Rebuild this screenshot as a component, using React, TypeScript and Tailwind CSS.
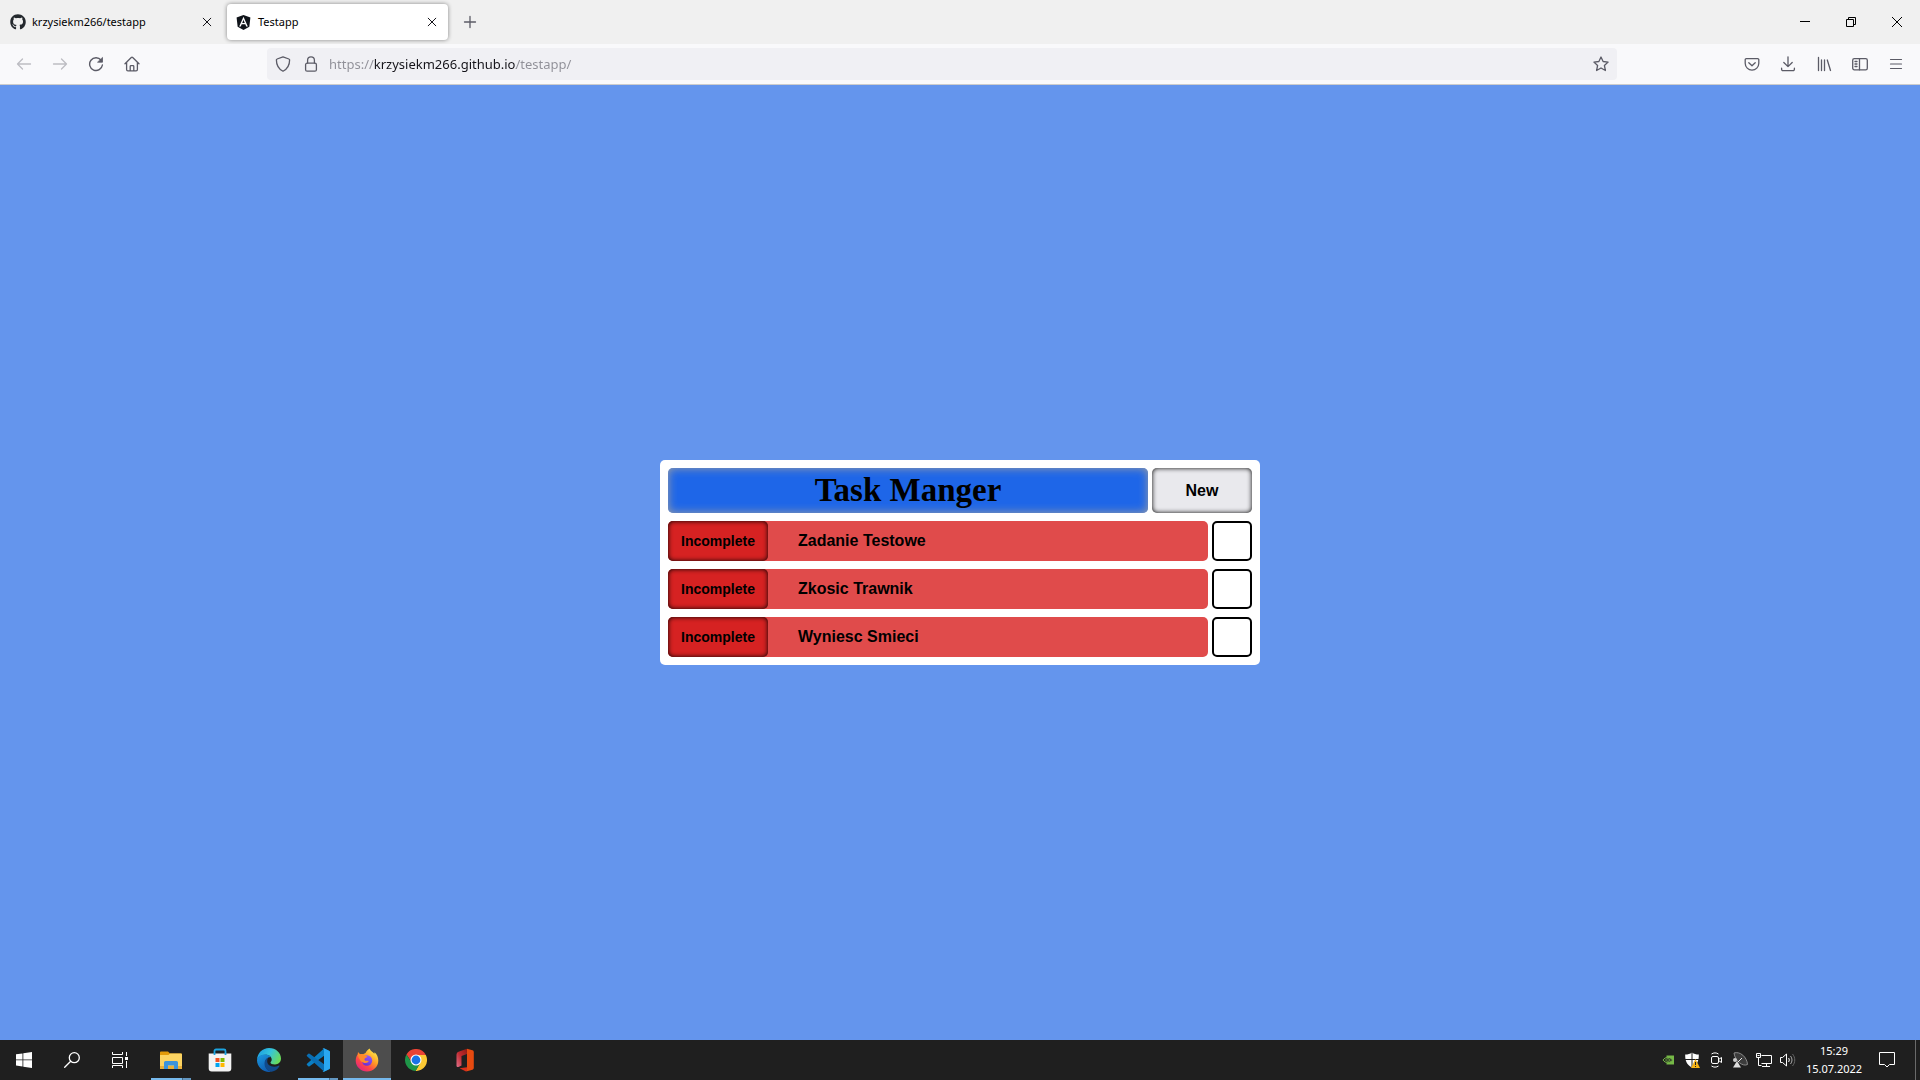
import { useState, type ReactNode } from "react";
import { FaAngular, FaGithub } from "react-icons/fa";

const line = {
  fill: "none",
  stroke: "currentColor",
  strokeLinecap: "round",
  strokeLinejoin: "round",
} as const;

function IconButton({ label, className = "", children }: { label: string; className?: string; children: ReactNode }) {
  return (
    <button type="button" aria-label={label} className={`flex h-8 w-9 shrink-0 items-center justify-center ${className}`}>
      {children}
    </button>
  );
}

function CloseIcon() {
  return (
    <svg width="16" height="16" viewBox="0 0 16 16" {...line}>
      <path d="M4.2 4.2l7.6 7.6M11.8 4.2l-7.6 7.6" />
    </svg>
  );
}

function TabStrip() {
  return (
    <header className="flex h-11 items-center bg-[#f0f0f0] text-[#15141a]">
      <div className="mr-2 flex h-9 w-[219px] items-center pl-2.5">
        <FaGithub size={16} color="#24292e" />
        <a href="#repo" className="ml-1.5 flex-1 text-[11px] leading-4 text-black">krzysiekm266/testapp</a>
        <button type="button" aria-label="Close krzysiekm266/testapp" className="mr-1">
          <CloseIcon />
        </button>
      </div>
      <div className="flex h-9 w-[221px] items-center rounded bg-white pl-2 shadow-[0_0_4px_rgba(0,0,0,0.45)]">
        <FaAngular size={17} color="#10141a" />
        <a href="#testapp" className="ml-1.5 flex-1 text-[11px] leading-4 text-black">Testapp</a>
        <button type="button" aria-label="Close Testapp" className="mr-2">
          <CloseIcon />
        </button>
      </div>
      <button type="button" aria-label="New tab" className="ml-3.5 text-[#5b5b66]">
        <svg width="16" height="16" viewBox="0 0 16 16" {...line}>
          <path d="M8 2.5v11M2.5 8h11" strokeWidth="1.3" />
        </svg>
      </button>
      <div className="ml-auto flex text-black">
        <button type="button" aria-label="Minimize" className="flex h-9 w-[46px] items-center justify-center">
          <svg width="10" height="10" viewBox="0 0 10 10" fill="none" stroke="currentColor"><path d="M0 4.5h10" /></svg>
        </button>
        <button type="button" aria-label="Restore" className="flex h-9 w-[46px] items-center justify-center">
          <svg width="10" height="10" viewBox="0 0 10 10" fill="none" stroke="currentColor">
            <path d="M.5 2.5h7v7h-7zM2.5 2.5v-2h7v7h-2" />
          </svg>
        </button>
        <button type="button" aria-label="Close window" className="flex h-9 w-[46px] items-center justify-center">
          <svg width="10" height="10" viewBox="0 0 10 10" fill="none" stroke="currentColor"><path d="M0 0l10 10M10 0L0 10" /></svg>
        </button>
      </div>
    </header>
  );
}

function Toolbar() {
  return (
    <nav className="flex h-[41px] items-center border-b border-[#ccc] bg-[#f9f9fb] px-1.5 text-[#5b5b66]">
      <IconButton label="Back" className="text-[#bdbdc2]">
        <svg width="16" height="16" viewBox="0 0 16 16" {...line} strokeWidth="1.3"><path d="M14.5 8h-13M6.5 3L1.5 8l5 5" /></svg>
      </IconButton>
      <IconButton label="Forward" className="text-[#bdbdc2]">
        <svg width="16" height="16" viewBox="0 0 16 16" {...line} strokeWidth="1.3"><path d="M1.5 8h13M9.5 3l5 5-5 5" /></svg>
      </IconButton>
      <IconButton label="Reload">
        <svg width="16" height="16" viewBox="0 0 16 16" {...line} strokeWidth="1.4">
          <path d="M13.1 4.2A6.4 6.4 0 1 0 14.4 9" />
          <path d="M14.5 1.8v4.4h-4.6z" fill="currentColor" strokeWidth=".8" />
        </svg>
      </IconButton>
      <IconButton label="Home">
        <svg width="16" height="16" viewBox="0 0 16 16" {...line} strokeWidth="1.3">
          <path d="M1 7.8L7.3 1.5a1 1 0 0 1 1.4 0L15 7.8M2.6 6.5v7a1.3 1.3 0 0 0 1.3 1.3h8.2a1.3 1.3 0 0 0 1.3-1.3v-7M6.2 14.5v-4a.8.8 0 0 1 .8-.8h2a.8.8 0 0 1 .8.8v4" />
        </svg>
      </IconButton>
      <div className="ml-[117px] mr-[117px] flex h-8 flex-1 items-center rounded bg-[#f0f0f4] pl-2">
        <button type="button" aria-label="Tracking protection">
          <svg width="16" height="16" viewBox="0 0 16 16" {...line} strokeWidth="1.3">
            <path d="M8 .8l5.9 2.2a1 1 0 0 1 .7.9c0 5-1.7 8.7-6.6 11.3C3.1 12.6 1.4 8.9 1.4 3.9a1 1 0 0 1 .7-.9z" />
          </svg>
        </button>
        <button type="button" aria-label="Connection secure" className="ml-3">
          <svg width="16" height="16" viewBox="0 0 16 16" {...line} strokeWidth="1.3">
            <rect x="2.6" y="7.2" width="10.8" height="8" rx="1.5" />
            <path d="M4.6 7V4.2a3.4 3.4 0 0 1 6.800 0V7" />
          </svg>
        </button>
        <input
          type="text"
          aria-label="Address"
          defaultValue="https://krzysiekm266.github.io/testapp/"
          className="ml-2.5 h-8 min-w-0 flex-1 bg-[linear-gradient(90deg,#8f8f97_45px,#15141a_45px,#15141a_187px,#8f8f97_187px)] bg-clip-text text-[13px] text-transparent outline-none"
        />
        <button type="button" aria-label="Bookmark this page" className="mr-2">
          <svg width="16" height="16" viewBox="0 0 16 16" {...line} strokeWidth="1.3">
            <path d="M8 1l2.1 4.5 5 .6-3.7 3.4 1 5L8 12l-4.4 2.5 1-5L.9 6.1l5-.6z" />
          </svg>
        </button>
      </div>
      <IconButton label="Save to Pocket">
        <svg width="16" height="16" viewBox="0 0 16 16" {...line} strokeWidth="1.3">
          <path d="M2.3 2.6h11.4a1.1 1.1 0 0 1 1.1 1.1v3.6a6.8 6.8 0 0 1-13.6 0V3.7a1.1 1.1 0 0 1 1.1-1.1z" />
          <path d="M4.8 6.8L8 9.8l3.2-3" />
        </svg>
      </IconButton>
      <IconButton label="Downloads">
        <svg width="16" height="16" viewBox="0 0 16 16" {...line} strokeWidth="1.3">
          <path d="M8 .8v9.8M3.8 6.5L8 10.6l4.2-4.1M1.6 12.2v1.1a1.3 1.3 0 0 0 1.3 1.3h10.2a1.3 1.3 0 0 0 1.3-1.3v-1.1" />
        </svg>
      </IconButton>
      <IconButton label="Library">
        <svg width="16" height="16" viewBox="0 0 16 16" {...line} strokeWidth="1.3">
          <path d="M2.5 1.5v13M5.5 4v10.5M8.5 4v10.5M11.3 4l3.2 10.5" />
        </svg>
      </IconButton>
      <IconButton label="Sidebars">
        <svg width="16" height="16" viewBox="0 0 16 16" {...line} strokeWidth="1.3">
          <rect x=".7" y="2.6" width="14.6" height="11.2" rx="1.6" />
          <path d="M7.5 2.6v11.2M3 5.5h2M3 8h2M3 10.5h2" />
        </svg>
      </IconButton>
      <IconButton label="Menu">
        <svg width="16" height="16" viewBox="0 0 16 16" {...line} strokeWidth="1.2"><path d="M2.5 3.5h11M2.5 8h11M2.5 12.5h11" /></svg>
      </IconButton>
    </nav>
  );
}

const initialTasks = ["Zadanie Testowe", "Zkosic Trawnik", "Wyniesc Smieci"];

function TaskManager() {
  const [done, setDone] = useState<boolean[]>(initialTasks.map(() => false));
  const toggle = (i: number) => setDone((d) => d.map((v, j) => (j === i ? !v : v)));

  return (
    <section className="flex w-[600px] flex-col gap-2 rounded-[5px] bg-white p-2 font-['Liberation_Sans',sans-serif] font-bold text-black">
      <div className="flex gap-1">
        <h1 className="flex h-[45px] flex-1 items-center justify-center rounded-[5px] bg-[#1e66e8] font-['Liberation_Serif',serif] text-[33px] font-bold shadow-[inset_0_0_10px_#a0a0a0]">
          Task Manger
        </h1>
        <button type="button" className="w-[100px] rounded-[5px] bg-[#e9e9ed] text-base font-bold shadow-[inset_0_0_5px_#000]">New</button>
      </div>
      {initialTasks.map((task, i) => (
        <div key={task} className="flex h-10 gap-1">
          <div className="flex flex-1 items-center rounded-[5px] bg-[#e04b4b]">
            <button
              type="button"
              onClick={() => toggle(i)}
              className="h-10 w-[100px] rounded-[5px] bg-[#d62222] text-sm font-bold shadow-[inset_0_0_5px_#000]"
            >
              {done[i] ? "Complete" : "Incomplete"}
            </button>
            <label htmlFor={`task-${i}`} className="ml-[30px] text-base">{task}</label>
          </div>
          <input
            id={`task-${i}`}
            type="checkbox"
            checked={done[i]}
            onChange={() => toggle(i)}
            className="size-10 appearance-none rounded-[5px] border-2 border-black bg-white checked:bg-green-600"
          />
        </div>
      ))}
    </section>
  );
}

function ExplorerIcon() {
  return (
    <svg width="24" height="24" viewBox="0 0 24 24">
      <path d="M1 4.5a1 1 0 0 1 1-1h7l2 2h11.5v6H1z" fill="#e29a09" />
      <path d="M1 7h8.5l1.5-1.500h11a1 1 0 0 1 1 1V20H1z" fill="#fcd462" />
      <path d="M1 18h22v3H1z" fill="#e9b03a" />
      <path d="M5 21v-6.500A1.500 1.500 0 0 1 6.500 13h11a1.500 1.500 0 0 1 1.500 1.500V21h-4v-3.500H9V21z" fill="#3c94dc" />
    </svg>
  );
}

function StoreIcon() {
  return (
    <svg width="24" height="24" viewBox="0 0 24 24">
      <path d="M.7 5.500h22.600v15a3 3 0 0 1-3 3H3.700a3 3 0 0 1-3-3z" fill="#f3f3f3" />
      <path d="M6.500 7V3A1.500 1.500 0 0 1 8 1.500h8A1.500 1.500 0 0 1 17.500 3v4" fill="none" stroke="#1ca4e0" strokeWidth="1.800" />
      <path d="M7.500 10h4v4h-4z" fill="#f25022" />
      <path d="M12.500 10h4v4h-4z" fill="#7fba00" />
      <path d="M7.500 15h4v4h-4z" fill="#00a4ef" />
      <path d="M12.500 15h4v4h-4z" fill="#ffb900" />
    </svg>
  );
}

function EdgeIcon() {
  return (
    <svg width="24" height="24" viewBox="0 0 24 24">
      <defs>
        <linearGradient id="edgeTop" x1="0" y1="0.2" x2="1" y2="0.6">
          <stop offset="0" stopColor="#1b9de2" />
          <stop offset=".5" stopColor="#35c4dc" />
          <stop offset="1" stopColor="#6bdc57" />
        </linearGradient>
        <linearGradient id="edgeLeft" x1="0" y1="0" x2=".6" y2="1">
          <stop offset="0" stopColor="#1b9ae2" />
          <stop offset="1" stopColor="#0f5cb0" />
        </linearGradient>
      </defs>
      <path d="M0 11.500C.5 5 5.500 0 12 0c7 0 12 5 12 10.500 0 3.600-2.700 5.900-6 5.900-2.900 0-4.500-.9-4.500-2 0-.7 1.200-1.100 1.200-3 0-2.500-2.600-4.700-6-4.700-4 0-7.300 2-8.700 4.800z" fill="url(#edgeTop)" />
      <path d="M0 12C.6 8.300 4.300 6.500 8.500 6.500c2.500 0 4.500 1 5.500 2.500-4 0-6 3-6 6.500 0 4.500 3.500 8 7 8.100C7.500 25.200 0 20 0 12z" fill="url(#edgeLeft)" />
      <path d="M11.500 9.600C8.800 10.500 7.500 13 7.500 15.500c0 4.500 3.300 8.200 7.200 8.200 3.300-.6 5.900-2.600 7.600-5.300.4-.7-.2-1-.8-.7-5 2.400-11.300.4-11.300-4.400 0-1.500.5-2.700 1.300-3.700z" fill="#114a8b" />
    </svg>
  );
}

function CodeIcon() {
  return (
    <svg width="24" height="24" viewBox="0 0 24 24">
      <path d="M18 .5L1 15.800a.8.800 0 0 0 0 1.200l1.300 1.200a1 1 0 0 0 1.300 0L24 3.500z" fill="#0a7fc4" />
      <path d="M18 23.500L1 8.200A.8.800 0 0 1 1 7l1.300-1.200a1 1 0 0 1 1.300 0L24 20.500z" fill="#0a6fb5" />
      <path d="M18 .2l5.200 2.500a1.300 1.300 0 0 1 .8 1.200v16.200a1.300 1.300 0 0 1-.8 1.200L18 23.800c-.6.300-1.300 0-1.800-.6.700.6 1.800.1 1.800-.9V1.700c0-1-1.100-1.500-1.800-.9.500-.6 1.200-.9 1.800-.6z" fill="#2aa7f0" />
    </svg>
  );
}

function FirefoxIcon() {
  return (
    <svg width="24" height="24" viewBox="0 0 24 24">
      <defs>
        <linearGradient id="fox" x1=".85" y1=".1" x2=".2" y2=".95">
          <stop offset="0" stopColor="#ffe84a" />
          <stop offset=".4" stopColor="#ff9a24" />
          <stop offset=".7" stopColor="#ff4647" />
          <stop offset="1" stopColor="#e0247f" />
        </linearGradient>
        <linearGradient id="foxGlobe" x1=".7" y1="0" x2=".3" y2="1">
          <stop offset="0" stopColor="#9059ff" />
          <stop offset="1" stopColor="#6a2fd0" />
        </linearGradient>
      </defs>
      <path d="M14.500.5c1 2.500 3.500 3.500 4.800 5.300l.3-1.600c2.500 2 3.700 5.200 3.700 8.200A11.300 11.300 0 0 1 12 23.600 11.300 11.300 0 0 1 .7 12.400c0-3 1.200-5 2-6.200L3 4l2 2.200c1-.3 2-.2 3 .1L10.500 5c.8-1.600 2.400-3.500 4-4.500z" fill="url(#fox)" />
      <circle cx="12" cy="12.5" r="5.2" fill="url(#foxGlobe)" />
      <path d="M3 5l2.500 1.500c2-.5 3.800.3 4.700 1.500l2.300.3c-.3 1.500-2.800 1.800-3 2.700 0 1.200.5 2 2.500 1.700 1.500-.2 2 .5 1.300 1.200-1.300 1.300-3.500 1.400-5 .6-1 0-2.500-1-3.300-2.500C4 10 2.500 8 3 5z" fill="#ff8a2b" />
    </svg>
  );
}

function ChromeIcon() {
  return (
    <svg width="22" height="22" viewBox="0 0 24 24">
      <path d="M12 6.500h10.700A12 12 0 0 0 1.600 6l5.300 8z" fill="#ea4335" />
      <path d="M16.800 14.800L11.500 24A12 12 0 0 0 22.700 6.500H12z" fill="#fcc934" />
      <path d="M7.200 14.700L1.600 6A12 12 0 0 0 11.500 24l5.300-9.200z" fill="#1e9648" />
      <circle cx="12" cy="12" r="6" fill="#fff" />
      <circle cx="12" cy="12" r="4.8" fill="#1a73e8" />
    </svg>
  );
}

function OfficeIcon() {
  return (
    <svg width="24" height="24" viewBox="0 0 24 24">
      <defs>
        <linearGradient id="officeSide" x1="0" y1="1" x2="1" y2="0">
          <stop offset="0" stopColor="#e0708a" />
          <stop offset=".5" stopColor="#c02a30" />
          <stop offset="1" stopColor="#8e1a12" />
        </linearGradient>
      </defs>
      <path d="M14 .7L5.500 3.800A3 3 0 0 0 3.500 6.600v11.200c0 1.400 1.500 1.500 2.500 1l2.500-1.400V8L14 6z" fill="url(#officeSide)" />
      <path d="M14 .7l5.500 1.500a1.800 1.800 0 0 1 1.300 1.700v16.200a1.800 1.800 0 0 1-1.300 1.700L14 23.300z" fill="#e64a10" />
      <path d="M6.500 20.200l7.500-1v4.100l-1 .2z" fill="#d8301c" />
    </svg>
  );
}

type AppEntry = { name: string; icon: ReactNode; state?: "many" | "active" };

const apps: AppEntry[] = [
  { name: "File Explorer", icon: <ExplorerIcon />, state: "many" },
  { name: "Microsoft Store", icon: <StoreIcon /> },
  { name: "Edge", icon: <EdgeIcon /> },
  { name: "Visual Studio Code", icon: <CodeIcon />, state: "many" },
  { name: "Firefox", icon: <FirefoxIcon />, state: "active" },
  { name: "Chrome", icon: <ChromeIcon /> },
  { name: "Office", icon: <OfficeIcon /> },
];

function AppButton({ app }: { app: AppEntry }) {
  return (
    <button
      type="button"
      aria-label={app.name}
      className={`flex h-10 w-12 flex-col items-center ${app.state === "active" ? "bg-[#4d4d4d]" : ""}`}
    >
      <span className="flex h-[38px] items-center pt-0.5">{app.icon}</span>
      {app.state === "active" && <span className="h-0.5 w-full bg-[#76b9ed]" />}
      {app.state === "many" && (
        <span className="flex h-0.5 w-10">
          <span className="flex-1 bg-[#76b9ed]" />
          <span className="w-px bg-[#466c8a]" />
          <span className="w-2 bg-[#6397c1]" />
        </span>
      )}
    </button>
  );
}

function TrayIcon({ label, children }: { label: string; children: ReactNode }) {
  return (
    <button type="button" aria-label={label} className="flex h-10 w-6 items-center justify-center">
      <svg width="16" height="16" viewBox="0 0 16 16" fill="none" stroke="currentColor">{children}</svg>
    </button>
  );
}

function Taskbar() {
  return (
    <footer className="flex h-10 bg-[#1f1f1f] text-white">
      <button type="button" aria-label="Start" className="flex w-12 items-center justify-center">
        <svg width="16" height="16" viewBox="0 0 16 16" fill="currentColor">
          <path d="M0 2.300l6.500-.9v6.100H0zM7.300 1.300L16 0v7.500H7.300zM0 8.300h6.500v6.200L0 13.600zM7.300 8.300H16V16l-8.700-1.300z" />
        </svg>
      </button>
      <button type="button" aria-label="Search" className="flex w-12 items-center justify-center">
        <svg width="16" height="16" viewBox="0 0 16 16" {...line} strokeWidth="1.3">
          <circle cx="10.3" cy="5.7" r="5" />
          <path d="M6.700 9.300L.7 15.300" />
        </svg>
      </button>
      <button type="button" aria-label="Task view" className="mr-[3px] flex w-12 items-center justify-center">
        <svg width="16" height="16" viewBox="0 0 16 16" fill="none" stroke="currentColor">
          <path d="M.5 0v2.500h10V0M.5 5.500h10v6H.5zM.5 16v-2.500h10V16M14.500 0v4M14.500 9v7" />
          <path d="M13 5h3v3h-3z" fill="currentColor" stroke="none" />
        </svg>
      </button>
      <div className="flex gap-px">
        {apps.map((app) => <AppButton key={app.name} app={app} />)}
      </div>
      <div className="ml-auto flex">
        <TrayIcon label="NVIDIA settings">
          <path d="M6.500 3.500H14v9H6.500z" fill="#76b947" stroke="none" />
          <path d="M3 8c2.500-3.500 7-3.500 9.500 0-3 3.500-7 3.500-9.500 0z" fill="#1f1f1f" stroke="#76b947" />
          <path d="M5.500 8c1.200-1.700 3.600-1.700 4.800 0-1.200 1.700-3.600 1.700-4.800 0z" stroke="#76b947" />
        </TrayIcon>
        <TrayIcon label="Windows Security">
          <path d="M8 .5c2 1.500 4 2 6.800 2C15 9 13 13 8 15.500 3 13 1 9 1.200 2.500 4 2.500 6 2 8 .5z" fill="#fff" stroke="none" />
          <path d="M8 0v16M1 7.500h14" stroke="#1f1f1f" />
          <path d="M11.500 7l4.500 9H7z" fill="#f8b416" stroke="none" />
          <path d="M11.500 10v3M11.500 14v1" stroke="#222" />
        </TrayIcon>
        <TrayIcon label="Meet now">
          <rect x="3.5" y="4.5" width="7" height="7" rx="1.5" />
          <path d="M10.500 7.500l3-2v5l-3-2M3.500 2c2-1.500 5-1.500 7 0M3.500 14c2 1.500 5 1.500 7 0" />
        </TrayIcon>
        <TrayIcon label="Network tool">
          <path d="M2 1C8-1 15 5 15.500 12.500 11 15 3 9 2 1z" fill="#3c3c3c" stroke="#8a8a8a" />
          <path d="M5 9L1 15.500h8z" fill="#ddd" stroke="none" />
          <path d="M6 10l4-4" stroke="#eee" />
          <circle cx="3" cy="8" r="2" fill="#ccc" stroke="none" />
        </TrayIcon>
        <TrayIcon label="Network">
          <path d="M5.500 3.500h10v8h-10M10.500 11.500v3M6 14.500h8M.5 1.500h4v4h-4zM2.500 5.500v8h3M1.500 3.500h2" />
        </TrayIcon>
        <TrayIcon label="Volume">
          <path d="M.5 5.500h2l4-3.500v12l-4-3.500h-2z" />
          <path d="M8.500 6c1 1.200 1 2.800 0 4" />
          <path d="M10.500 4c2 2.300 2 5.700 0 8" stroke="#aaa" />
          <path d="M12.500 2c3 3.500 3 8.500 0 12" stroke="#666" />
        </TrayIcon>
        <button type="button" className="flex w-[68px] flex-col items-center justify-center text-[11px] leading-[18px]">
          <time>15:29</time>
          <time>15.07.2022</time>
        </button>
        <button type="button" aria-label="Notifications" className="flex w-[38px] items-center justify-center">
          <svg width="16" height="16" viewBox="0 0 16 16" fill="none" stroke="currentColor">
            <path d="M.5.5h15v12h-5L8 15l-2.500-2.500h-5z" />
          </svg>
        </button>
        <button type="button" aria-label="Show desktop" className="ml-[9px] w-[5px] border-l border-[#6a6a6a]" />
      </div>
    </footer>
  );
}

export default function App() {
  return (
    <div className="flex min-h-screen flex-col bg-[#6495ed] font-['Noto_Sans',sans-serif]">
      <TabStrip />
      <Toolbar />
      <main className="flex flex-1 items-center justify-center">
        <TaskManager />
      </main>
      <Taskbar />
    </div>
  );
}
